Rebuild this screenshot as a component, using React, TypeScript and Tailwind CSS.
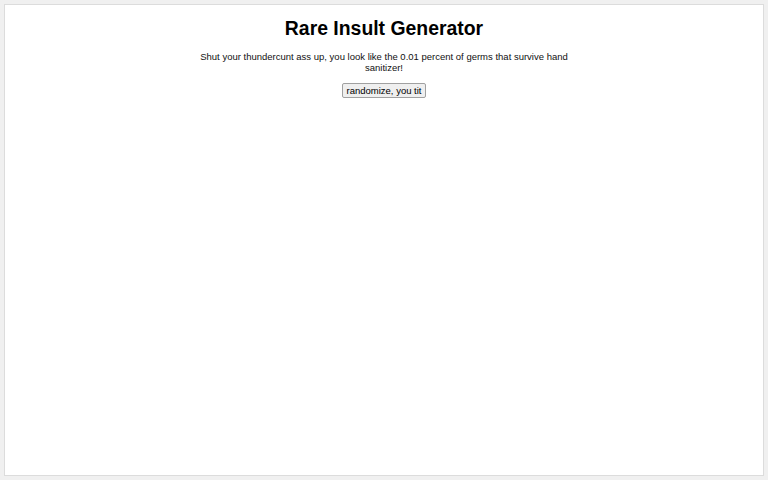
export default function App() {
  return (
    <div className="w-[768px] h-[480px] bg-[#f0f0f0] p-[4px]" style={{ fontFamily: '"Liberation Sans", Arial, sans-serif' }}>
      <div className="h-full bg-white border border-[#dcdcdc] flex flex-col items-center">
        <h1 className="mt-[11px] text-[19.4px] leading-[24px] font-bold text-black">Rare Insult Generator</h1>
        <p className="mt-[11px] w-[372px] text-center text-[9.5px] leading-[11px] text-[#111]">
          Shut your thundercunt ass up, you look like the 0.01 percent of germs that survive hand sanitizer!
        </p>
        <button className="mt-[10px] px-[4px] h-[15px] text-[9.5px] leading-[12px] text-black bg-[#efefef] border border-[#a0a0a0] rounded-[2px]">
          randomize, you tit
        </button>
      </div>
    </div>
  );
}
